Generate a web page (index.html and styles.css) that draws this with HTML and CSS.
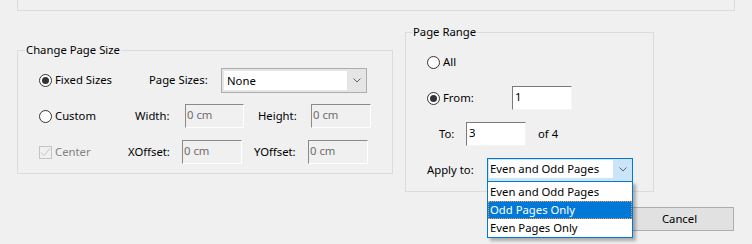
FILE: index.html
```html
<!DOCTYPE html>
<html>
<head>
<meta charset="utf-8">
<link rel="stylesheet" href="styles.css">
</head>
<body>
<div class="dialog">
  <div class="topbox"></div>
  <div class="groups">
    <fieldset class="group size">
      <legend>Change Page Size</legend>
      <div class="row">
        <div class="opt w110"><span class="radio on"></span><span>Fixed Sizes</span></div>
        <span class="lbl w72">Page Sizes:</span>
        <div class="combo gray w146">
          <span class="field">None</span>
          <span class="arrow"><svg width="8" height="5" viewBox="0 0 8 5"><path d="M0.5 0.5 L4 4 L7.5 0.5" fill="none" stroke="#606060" stroke-width="1"/></svg></span>
        </div>
      </div>
      <div class="row">
        <div class="opt w96"><span class="radio"></span><span>Custom</span></div>
        <span class="lbl w50">Width:</span>
        <span class="input dis w59">0 cm</span>
        <span class="lbl ml14 w53">Height:</span>
        <span class="input dis w60">0 cm</span>
      </div>
      <div class="row">
        <div class="opt w89 disabled"><span class="check"><svg width="11" height="11" viewBox="0 0 11 11"><path d="M1 5.5 L4 8.5 L10 1.5" fill="none" stroke="#c4c4c4" stroke-width="1"/></svg></span><span>Center</span></div>
        <span class="lbl w54">XOffset:</span>
        <span class="input dis w60">0 cm</span>
        <span class="lbl ml12 w54">YOffset:</span>
        <span class="input dis w60">0 cm</span>
      </div>
    </fieldset>
    <fieldset class="group range">
      <legend>Page Range</legend>
      <div class="row">
        <div class="opt"><span class="radio"></span><span>All</span></div>
      </div>
      <div class="row">
        <div class="opt w85"><span class="radio on"></span><span>From:</span></div>
        <span class="input w60">1</span>
      </div>
      <div class="row">
        <span class="lbl ml12 w27">To:</span>
        <span class="input w60">3</span>
        <span class="lbl ml12">of 4</span>
      </div>
      <div class="row">
        <span class="lbl w60">Apply to:</span>
        <div class="combo-wrap">
          <div class="combo focus w146">
            <span class="field">Even and Odd Pages</span>
            <span class="arrow"><svg width="8" height="5" viewBox="0 0 8 5"><path d="M0.5 0.5 L4 4 L7.5 0.5" fill="none" stroke="#606060" stroke-width="1"/></svg></span>
          </div>
          <ul class="list">
            <li>Even and Odd Pages</li>
            <li class="sel">Odd Pages Only</li>
            <li>Even Pages Only</li>
          </ul>
        </div>
      </div>
    </fieldset>
  </div>
  <div class="buttons">
    <button class="btn">Cancel</button>
  </div>
</div>
</body>
</html>
```
FILE: styles.css
```css
* { box-sizing: border-box; }
html, body { margin: 0; padding: 0; background: #f0f0f0; }
body {
  font-family: "Noto Sans", "Liberation Sans", sans-serif;
  font-size: 11.3px;
  line-height: 16px;
  color: #000;
  width: 752px;
  height: 244px;
  overflow: hidden;
}
.topbox {
  margin-left: 17px;
  width: 718px;
  height: 11px;
  border: 1px solid #dcdcdc;
  border-top: 0;
}
.groups { display: flex; align-items: flex-start; }
fieldset.group {
  margin: 0;
  padding: 4px 0 3px 0;
  border: 1px solid #dcdcdc;
  min-width: 0;
}
fieldset.group legend {
  padding: 0 1px;
  line-height: 16px;
  height: 16px;
}
.size { margin: 31px 0 0 17px !important; width: 376px; }
.size legend { margin-left: 7px; }
.range { margin: 13px 0 0 12px !important; width: 249px; }
.range legend { margin-left: 6px; }
.row {
  display: flex;
  align-items: center;
  height: 36px;
  padding-left: 21px;
}
.opt { display: flex; align-items: center; }
.opt.disabled { color: #838383; }
.radio {
  width: 13px; height: 13px;
  border: 1px solid #333;
  border-radius: 50%;
  background: #fff;
  margin-right: 3px;
  display: flex; align-items: center; justify-content: center;
  flex: none;
}
.radio.on::after {
  content: "";
  width: 7px; height: 7px;
  border-radius: 50%;
  background: #333;
}
.check {
  width: 13px; height: 13px;
  border: 1px solid #c4c4c4;
  background: #f0f0f0;
  margin-right: 3px;
  display: flex; align-items: center; justify-content: center;
  flex: none;
}
.lbl { white-space: nowrap; }
.w27 { width: 27px; } .w50 { width: 50px; } .w53 { width: 53px; }
.w54 { width: 54px; } .w59 { width: 59px; } .w60 { width: 60px; }
.w72 { width: 72px; } .w85 { width: 85px; } .w89 { width: 89px; }
.w96 { width: 96px; } .w110 { width: 110px; } .w146 { width: 146px; }
.ml12 { margin-left: 12px; } .ml14 { margin-left: 14px; }
.input {
  height: 24px;
  background: #fff;
  border: 1px solid;
  border-color: #7a7a7a #f4f4f4 #f4f4f4 #7a7a7a;
  padding: 2px 2px 0;
  flex: none;
}
.input.dis {
  background: #f0f0f0;
  color: #6d6d6d;
  border-color: #8a8a8a #ffffff #ffffff #8a8a8a;
  padding-left: 1px;
}
.combo {
  display: flex;
  height: 25px;
  border: 1px solid #adadad;
  background: #e5e5e5;
  padding: 2px 0 2px 2px;
  flex: none;
}
.combo .field {
  flex: 1;
  background: #fff;
  padding-left: 3px;
  line-height: 19px;
}
.combo .arrow {
  width: 19px;
  display: flex; align-items: center; justify-content: center;
}
.combo.focus {
  height: 24px;
  border-color: #0078d7;
  background: #cce4f7;
  padding: 1px 0 3px 1px;
}
.combo.focus .field { padding-left: 1px; line-height: 18px; }
.combo-wrap { position: relative; }
.list {
  position: absolute;
  top: 23px;
  left: 0;
  width: 146px;
  height: 57px;
  margin: 0;
  padding: 1px 0 0;
  list-style: none;
  background: #fff;
  border: 1px solid #0078d7;
  box-shadow: 3px 3px 3px rgba(0, 0, 0, 0.28);
  z-index: 5;
}
.list li {
  height: 18px;
  line-height: 16px;
  border: 1px solid transparent;
  padding-left: 1px;
  white-space: nowrap;
}
.list li.sel {
  background: #0078d7;
  color: #fff;
  border: 1px dotted #f0a050;
}
.buttons {
  width: 734px;
  display: flex;
  justify-content: flex-end;
  margin-top: 15px;
}
.btn {
  width: 109px;
  height: 24px;
  border: 1px solid #adadad;
  background: #e1e1e1;
  font: inherit;
  color: #000;
  padding: 0;
}
```
